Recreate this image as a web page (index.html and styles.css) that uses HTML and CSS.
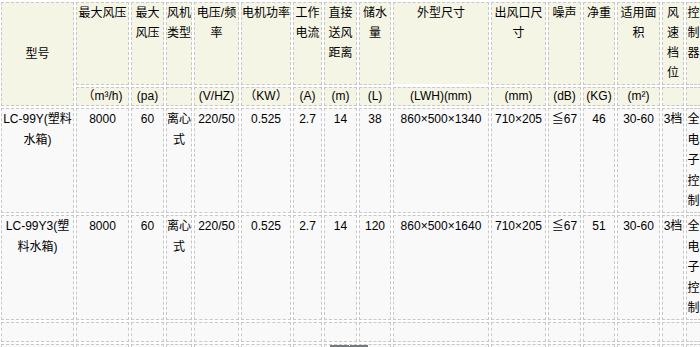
FILE: index.html
```
<!DOCTYPE html>
<html lang="zh-CN">
<head>
<meta charset="utf-8">
<title>产品参数</title>
<link rel="stylesheet" href="styles.css">
</head>
<body>
<table class="spec">
  <tr class="head">
    <td class="c-model mid" rowspan="2">型号</td>
    <td class="c-flow">最大风压</td>
    <td class="c-pa">最大风压</td>
    <td class="c-type">风机类型</td>
    <td class="c-volt">电压/频率</td>
    <td class="c-power">电机功率</td>
    <td class="c-amp">工作电流</td>
    <td class="c-dist">直接送风距离</td>
    <td class="c-water">储水量</td>
    <td class="c-size nobottom">外型尺寸</td>
    <td class="c-outlet">出风口尺寸</td>
    <td class="c-noise">噪声</td>
    <td class="c-weight">净重</td>
    <td class="c-area">适用面积</td>
    <td class="c-speed">风速档位</td>
    <td class="c-ctrl">控制器</td>
  </tr>
  <tr class="units">
    <td>（m³/h)</td>
    <td>(pa)</td>
    <td></td>
    <td>(V/HZ)</td>
    <td>（KW）</td>
    <td>(A)</td>
    <td>(m)</td>
    <td>(L)</td>
    <td>(LWH)(mm)</td>
    <td>(mm)</td>
    <td>(dB)</td>
    <td>(KG)</td>
    <td>(m²)</td>
    <td></td>
    <td></td>
  </tr>
  <tr class="data">
    <td>LC-99Y(塑料水箱)</td>
    <td>8000</td>
    <td>60</td>
    <td>离心式</td>
    <td>220/50</td>
    <td>0.525</td>
    <td>2.7</td>
    <td>14</td>
    <td>38</td>
    <td>860×500×1340</td>
    <td>710×205</td>
    <td>≦67</td>
    <td>46</td>
    <td>30-60</td>
    <td>3档</td>
    <td>全电子控制</td>
  </tr>
  <tr class="data">
    <td>LC-99Y3(塑料水箱)</td>
    <td>8000</td>
    <td>60</td>
    <td>离心式</td>
    <td>220/50</td>
    <td>0.525</td>
    <td>2.7</td>
    <td>14</td>
    <td>120</td>
    <td>860×500×1640</td>
    <td>710×205</td>
    <td>≦67</td>
    <td>51</td>
    <td>30-60</td>
    <td>3档</td>
    <td>全电子控制</td>
  </tr>
  <tr class="empty">
    <td>&nbsp;</td><td>&nbsp;</td><td>&nbsp;</td><td>&nbsp;</td>
    <td>&nbsp;</td><td>&nbsp;</td><td>&nbsp;</td><td>&nbsp;</td>
    <td>&nbsp;</td><td>&nbsp;</td><td>&nbsp;</td><td>&nbsp;</td>
    <td>&nbsp;</td><td>&nbsp;</td><td>&nbsp;</td><td>&nbsp;</td>
  </tr>
  <tr class="empty">
    <td>&nbsp;</td><td>&nbsp;</td><td>&nbsp;</td><td>&nbsp;</td>
    <td>&nbsp;</td><td>&nbsp;</td><td>&nbsp;</td><td>&nbsp;</td>
    <td>&nbsp;</td><td>&nbsp;</td><td>&nbsp;</td><td>&nbsp;</td>
    <td>&nbsp;</td><td>&nbsp;</td><td>&nbsp;</td><td>&nbsp;</td>
  </tr>
</table>
<div class="float-bar"></div>
</body>
</html>
```
FILE: styles.css
```
html, body {
  margin: 0;
  padding: 0;
  overflow: hidden;
  background: #ffffff;
}

body {
  font-family: "Liberation Sans", "Noto Sans CJK SC", sans-serif;
  font-size: 12px;
  color: #000000;
}

.spec {
  border-collapse: separate;
  border-spacing: 2px;
  table-layout: fixed;
  width: 704px;
  margin: 0 0 0 -1px;
}

.spec td {
  border: 1px dashed #c8c8c8;
  padding: 0;
  text-align: center;
  vertical-align: top;
  box-sizing: border-box;
}

.head td {
  background: #f5f5e6;
  line-height: 20px;
  padding-bottom: 1px;
}

.head td.mid {
  vertical-align: middle;
  padding-bottom: 0;
}

.head td.nobottom {
  border-bottom-color: #ffffff;
  border-bottom-style: solid;
}

.units td {
  background: #f5f5e6;
  line-height: 17px;
}

.data td {
  background: #f9f9f9;
  line-height: 20.6px;
}

.empty td {
  background: #f9f9f9;
  line-height: 18px;
}

.c-model { width: 73px; }
.c-flow { width: 53px; }
.c-pa { width: 33px; }
.c-type { width: 26px; }
.c-volt { width: 45px; }
.c-power { width: 50px; }
.c-amp { width: 29px; }
.c-dist { width: 33px; }
.c-water { width: 32px; }
.c-size { width: 96px; }
.c-outlet { width: 55px; }
.c-noise { width: 33px; }
.c-weight { width: 32px; }
.c-area { width: 43px; }
.c-speed { width: 22px; }
.c-ctrl { width: 15px; }

.float-bar {
  position: absolute;
  left: 330px;
  top: 345px;
  width: 38px;
  height: 4px;
  background: #76797c;
}

.float-bar::after {
  content: "";
  position: absolute;
  left: 19px;
  top: 0;
  width: 1px;
  height: 1px;
  background: #ffffff;
}
```
